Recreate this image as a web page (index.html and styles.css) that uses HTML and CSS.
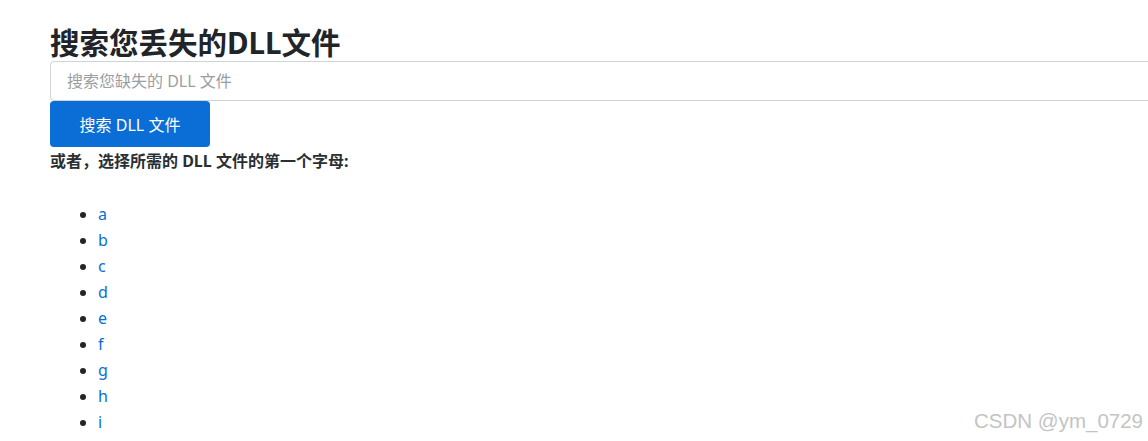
FILE: index.html
```html
<!DOCTYPE html>
<html lang="zh">
<head>
<meta charset="utf-8">
<link rel="stylesheet" href="styles.css">
</head>
<body>
<main class="page">
  <h1 class="title">搜索您丢失的DLL文件</h1>
  <form class="search">
    <input class="search-input" type="text" placeholder="搜索您缺失的 DLL 文件">
    <button class="search-btn" type="button">搜索 DLL 文件</button>
  </form>
  <p class="hint">或者，选择所需的 DLL 文件的第一个字母:</p>
  <ul class="letters">
    <li><a href="#">a</a></li>
    <li><a href="#">b</a></li>
    <li><a href="#">c</a></li>
    <li><a href="#">d</a></li>
    <li><a href="#">e</a></li>
    <li><a href="#">f</a></li>
    <li><a href="#">g</a></li>
    <li><a href="#">h</a></li>
    <li><a href="#">i</a></li>
  </ul>
</main>
<div class="watermark">CSDN @ym_0729</div>
</body>
</html>
```
FILE: styles.css
```css
html, body {
  margin: 0;
  padding: 0;
  overflow: hidden;
  height: 100%;
  background: #fff;
}
body {
  font-family: "Noto Sans", "Noto Sans CJK SC", sans-serif;
  color: #212529;
}
.page {
  padding: 26px 0 0 50px;
}
.title {
  margin: 0 0 1px;
  font-size: 29.5px;
  line-height: 34px;
  font-weight: 700;
  color: #212529;
}
.search {
  display: flex;
  flex-direction: column;
  align-items: flex-start;
  margin: 0;
}
.search-input {
  box-sizing: border-box;
  width: 1120px;
  height: 40px;
  margin: 0;
  padding: 0 16px;
  border: 1px solid #ced4da;
  border-radius: 4px;
  font-family: inherit;
  font-size: 16px;
  color: #212529;
  outline: none;
}
.search-input::placeholder {
  color: #9a9ea3;
}
.search-btn {
  box-sizing: border-box;
  width: 160px;
  height: 46px;
  margin: 0;
  padding: 0;
  border: 0;
  border-radius: 4px;
  background: #0a6ed6;
  color: #fff;
  font-family: inherit;
  font-size: 16px;
  white-space: nowrap;
  text-align: center;
  cursor: pointer;
}
.hint {
  margin: 2px 0 0;
  font-size: 16px;
  line-height: 24px;
  font-weight: 700;
  color: #2a2f33;
}
.letters {
  margin: 28px 0 0;
  padding-left: 48px;
  font-size: 16px;
  line-height: 26px;
}
.letters a {
  color: #0a6ed6;
  text-decoration: none;
}
.watermark {
  position: absolute;
  right: 5px;
  bottom: 8px;
  font-family: "Liberation Sans", Arial, sans-serif;
  font-size: 20.5px;
  color: #c4c4c4;
}
```
